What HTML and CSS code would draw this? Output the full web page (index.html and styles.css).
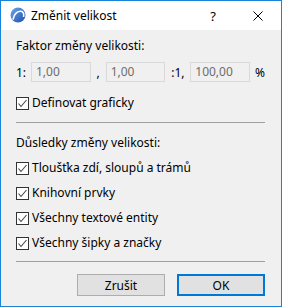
FILE: index.html
```html
<!DOCTYPE html>
<html lang="cs">
<head>
    <meta charset="UTF-8">
    <title>Změnit velikost</title>
    <link rel="stylesheet" href="styles.css">
</head>
<body>
    <div class="dialog">
        <div class="titlebar">
            <svg class="app-icon" width="16" height="16" viewBox="0 0 16 16">
                <defs>
                    <linearGradient id="lg" x1="0" y1="0" x2="1" y2="1">
                        <stop offset="0" stop-color="#6fa6e8"/>
                        <stop offset="1" stop-color="#1d4fb0"/>
                    </linearGradient>
                </defs>
                <circle cx="8" cy="8" r="7.5" fill="url(#lg)"/>
                <path d="M3 12.5 C4 6.5 8 3.5 12 4.5 C13.5 5.5 14 8 13.5 10" fill="none" stroke="#fff" stroke-width="1.6"/>
            </svg>
            <span class="title">Změnit velikost</span>
            <span class="help">?</span>
            <svg class="close" width="10" height="10" viewBox="0 0 10 10">
                <path d="M0.5 0.5 L9.5 9.5 M9.5 0.5 L0.5 9.5" stroke="#000" stroke-width="1"/>
            </svg>
        </div>
        <div class="content">
            <div class="label">Faktor změny velikosti:</div>
            <div class="factor-row">
                <span class="sep-text one">1:</span>
                <span class="field">1,00</span>
                <span class="sep-text comma">,</span>
                <span class="field">1,00</span>
                <span class="sep-text ratio">:1,</span>
                <span class="field">100,00</span>
                <span class="sep-text pct">%</span>
            </div>
            <label class="check first">
                <span class="box"><svg width="11" height="11" viewBox="0 0 11 11"><path d="M1.5 5.5 L4 8.5 L9.5 2" fill="none" stroke="#444" stroke-width="1.1"/></svg></span>
                Definovat graficky
            </label>
            <div class="rule"></div>
            <div class="label second">Důsledky změny velikosti:</div>
            <div class="checks">
                <label class="check">
                    <span class="box"><svg width="11" height="11" viewBox="0 0 11 11"><path d="M1.5 5.5 L4 8.5 L9.5 2" fill="none" stroke="#444" stroke-width="1.1"/></svg></span>
                    Tloušťka zdí, sloupů a trámů
                </label>
                <label class="check">
                    <span class="box"><svg width="11" height="11" viewBox="0 0 11 11"><path d="M1.5 5.5 L4 8.5 L9.5 2" fill="none" stroke="#444" stroke-width="1.1"/></svg></span>
                    Knihovní prvky
                </label>
                <label class="check">
                    <span class="box"><svg width="11" height="11" viewBox="0 0 11 11"><path d="M1.5 5.5 L4 8.5 L9.5 2" fill="none" stroke="#444" stroke-width="1.1"/></svg></span>
                    Všechny textové entity
                </label>
                <label class="check">
                    <span class="box"><svg width="11" height="11" viewBox="0 0 11 11"><path d="M1.5 5.5 L4 8.5 L9.5 2" fill="none" stroke="#444" stroke-width="1.1"/></svg></span>
                    Všechny šipky a značky
                </label>
            </div>
            <div class="rule bottom"></div>
            <div class="buttons">
                <button class="btn">Zrušit</button>
                <button class="btn default">OK</button>
            </div>
        </div>
    </div>
</body>
</html>
```
FILE: styles.css
```css
html, body{
    margin: 0;
    padding: 0;
}
body{
    font-family: "Noto Sans", "Liberation Sans", sans-serif;
    font-size: 12px;
    color: #000;
}
.dialog{
    width: 282px;
    height: 307px;
    box-sizing: border-box;
    border: 1px solid #1883d7;
    background: #f0f0f0;
    display: flex;
    flex-direction: column;
}
.titlebar{
    height: 29px;
    background: #fff;
    display: flex;
    align-items: center;
    padding-left: 9px;
}
.app-icon{
    margin-right: 5px;
    margin-top: -1px;
}
.title{
    flex: 1;
    font-size: 12px;
    margin-top: -1px;
}
.help{
    font-size: 13px;
    margin-right: 37px;
}
.close{
    margin-right: 18px;
}
.content{
    padding: 8px 16px 0 15px;
    display: flex;
    flex-direction: column;
}
.label{
    line-height: 16px;
}
.factor-row{
    display: flex;
    align-items: center;
    margin-top: 8px;
    height: 20px;
}
.field{
    width: 60px;
    height: 20px;
    box-sizing: border-box;
    border: 1px solid #d9d9d9;
    color: #6d6d6d;
    line-height: 18px;
    padding-left: 4px;
}
.sep-text.one{width: 15px;}
.sep-text.comma{width: 15px; text-align: center;}
.sep-text.ratio{width: 25px; text-align: center;}
.sep-text.pct{margin-left: 5px;}
.check{
    display: flex;
    align-items: center;
    height: 16px;
    line-height: 16px;
}
.check.first{margin-top: 13px;}
.box{
    width: 13px;
    height: 13px;
    box-sizing: border-box;
    border: 1px solid #333;
    background: #fff;
    display: flex;
    align-items: center;
    justify-content: center;
    margin-right: 3px;
}
.rule{
    height: 1px;
    background: #a0a0a0;
    margin-top: 11px;
}
.rule.bottom{margin-top: 10px;}
.label.second{margin-top: 12px;}
.checks{
    display: flex;
    flex-direction: column;
    gap: 9px;
    margin-top: 9px;
}
.buttons{
    display: flex;
    justify-content: flex-end;
    gap: 12px;
    margin-top: 12px;
}
.btn{
    width: 88px;
    height: 22px;
    box-sizing: border-box;
    border: 1px solid #adadad;
    background: #e1e1e1;
    font-family: inherit;
    font-size: 12px;
    padding: 0;
    color: #000;
}
.btn.default{
    border: 2px solid #0078d7;
}
```
